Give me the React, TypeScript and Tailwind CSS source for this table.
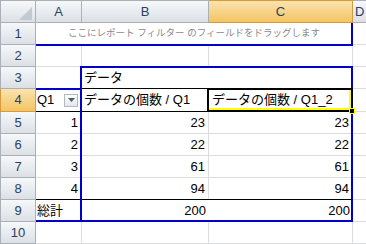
import React from 'react';

// Excel 2010 style pivot table sheet (A1:D10)

const GRID = 'border-[#dadcdd]';
const HDR =
  'bg-linear-to-b from-[#f6f8fa] to-[#dce0e5] border-[#aab0b8] text-[#27415f]';
const HDR_SEL =
  'bg-linear-to-b from-[#fbe3ae] to-[#f3c462] border-[#d99a3c] text-[#27415f]';

type RowProps = {
  n: number;
  h?: string;
  active?: boolean;
  children: React.ReactNode;
};

function Row({ n, h = 'h-[22px]', active, children }: RowProps) {
  return (
    <div className={`flex ${h}`}>
      <div
        className={`flex w-[36px] shrink-0 items-center justify-center border-b border-l border-r text-[13px] ${
          active ? HDR_SEL : HDR
        }`}
      >
        {n}
      </div>
      {children}
      <div className={`flex-1 border-b ${GRID}`} />
    </div>
  );
}

function Num({ v, w, noRight }: { v: number; w: string; noRight?: boolean }) {
  return (
    <div
      className={`flex ${w} shrink-0 items-center justify-end border-b ${
        noRight ? '' : 'border-r'
      } ${GRID} pr-[3px]`}
    >
      {v}
    </div>
  );
}

const DATA = [
  { q: 1, a: 23, b: 23 },
  { q: 2, a: 22, b: 22 },
  { q: 3, a: 61, b: 61 },
  { q: 4, a: 94, b: 94 },
];

export default function App() {
  return (
    <div className="relative h-[244px] w-[366px] overflow-hidden bg-white font-['Liberation_Sans','Noto_Sans_CJK_JP',sans-serif] text-[13px] text-black">
      {/* ── Column headers ─────────────────────────── */}
      <div className="flex h-[23px]">
        <div className={`relative w-[36px] shrink-0 border-b border-l border-r border-t ${HDR}`}>
          <svg className="absolute left-0 top-0" width="34" height="21" viewBox="0 0 34 21">
            <polygon points="31,6 31,19 18,19" fill="#c3c9d0" />
          </svg>
        </div>
        <div className={`flex w-[46px] shrink-0 items-center justify-center border-b border-r border-t ${HDR}`}>A</div>
        <div className={`flex w-[127px] shrink-0 items-center justify-center border-b border-r border-t ${HDR}`}>B</div>
        <div className={`flex w-[144px] shrink-0 items-center justify-center border-b border-r border-t ${HDR_SEL}`}>C</div>
        <div className={`flex flex-1 items-center border-b border-t pl-[2px] ${HDR}`}>D</div>
      </div>

      {/* ── Row 1: report filter drop zone ─────────── */}
      <Row n={1}>
        <div className={`flex w-[317px] shrink-0 items-center justify-center border-b border-r ${GRID} text-[9.5px] text-[#8a8a8a]`}>
          ここにレポート フィルター のフィールドをドラッグします
        </div>
      </Row>

      {/* ── Row 2 ──────────────────────────────────── */}
      <Row n={2}>
        <div className={`w-[46px] shrink-0 border-b border-r ${GRID}`} />
        <div className={`w-[127px] shrink-0 border-b border-r ${GRID}`} />
        <div className={`w-[144px] shrink-0 border-b border-r ${GRID}`} />
      </Row>

      {/* ── Row 3 ──────────────────────────────────── */}
      <Row n={3}>
        <div className={`w-[46px] shrink-0 border-b border-r ${GRID}`} />
        <div className="flex w-[127px] shrink-0 items-center border-b border-black pl-[2px]">データ</div>
        <div className={`w-[144px] shrink-0 border-b border-r border-b-black ${GRID}`} />
      </Row>

      {/* ── Row 4: pivot header ────────────────────── */}
      <Row n={4} h="h-[23px]" active>
        <div className="flex w-[46px] shrink-0 items-center border-b border-black pl-[1px]">
          <span className="flex-1">Q1</span>
          <span className="mr-[4px] flex h-[13px] w-[14px] items-center justify-center border border-[#b3b9c1] bg-linear-to-b from-white to-[#e3e7ec]">
            <svg width="7" height="4" viewBox="0 0 7 4">
              <polygon points="0,0 7,0 3.5,4" fill="#4a5e5e" />
            </svg>
          </span>
        </div>
        <div className={`flex w-[127px] shrink-0 items-center border-b border-r border-b-black ${GRID} pl-[2px] whitespace-nowrap`}>
          データの個数 / Q1
        </div>
        <div className={`flex w-[144px] shrink-0 items-center border-b border-r border-b-black ${GRID} pl-[3px] whitespace-nowrap`}>
          データの個数 / Q1_2
        </div>
      </Row>

      {/* ── Rows 5-8: values ───────────────────────── */}
      {DATA.map((d, i) => (
        <Row key={d.q} n={i + 5}>
          <Num v={d.q} w="w-[46px]" />
          <Num v={d.a} w="w-[127px]" />
          <Num v={d.b} w="w-[144px]" />
        </Row>
      ))}

      {/* ── Row 9: grand total ─────────────────────── */}
      <Row n={9}>
        <div className={`flex w-[46px] shrink-0 items-center border-b ${GRID} border-t border-t-black pl-[1px] -mt-px`}>総計</div>
        <div className={`flex w-[127px] shrink-0 items-center justify-end border-b ${GRID} border-t border-t-black pr-[3px] -mt-px`}>200</div>
        <div className={`flex w-[144px] shrink-0 items-center justify-end border-b ${GRID} border-t border-t-black pr-[3px] -mt-px`}>200</div>
      </Row>

      {/* ── Row 10 ─────────────────────────────────── */}
      <Row n={10}>
        <div className={`w-[46px] shrink-0 border-b border-r ${GRID}`} />
        <div className={`w-[127px] shrink-0 border-b border-r ${GRID}`} />
        <div className={`w-[144px] shrink-0 border-b border-r ${GRID}`} />
      </Row>

      {/* ── Pivot table outlines (drawn over the grid) ── */}
      <div className="absolute left-[36px] top-[44px] h-[2px] w-[317px] bg-[#0000cc]" />
      <div className="absolute left-[351px] top-[23px] h-[23px] w-[2px] bg-[#0000cc]" />
      <div className="absolute left-[80px] top-[66px] h-[2px] w-[273px] bg-[#0000cc]" />
      <div className="absolute left-[36px] top-[88px] h-[2px] w-[46px] bg-[#0000cc]" />
      <div className="absolute left-[80px] top-[66px] h-[156px] w-[2px] bg-[#0000cc]" />
      <div className="absolute left-[351px] top-[66px] h-[156px] w-[2px] bg-[#0000cc]" />
      <div className="absolute left-[36px] top-[220px] h-[2px] w-[317px] bg-[#0000cc]" />

      {/* ── Active cell C4 ─────────────────────────── */}
      <div className="absolute left-[207px] top-[88px] h-[24px] w-[146px] border-2 border-black">
        <div className="h-full w-full border-b-2 border-r-2 border-[#ffff00]" />
      </div>
      <div className="absolute left-[349px] top-[108px] h-[6px] w-[6px] border border-[#ffff00] bg-black" />
    </div>
  );
}
